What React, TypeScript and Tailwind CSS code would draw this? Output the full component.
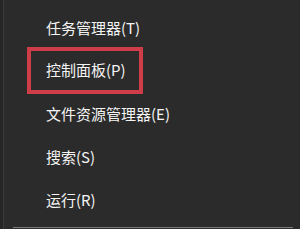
export default function App() {
  const items = ["任务管理器(T)", "控制面板(P)", "文件资源管理器(E)", "搜索(S)", "运行(R)"];

  return (
    <div
      className="w-[300px] h-[229px] bg-[#2b2b2b] flex overflow-hidden"
      style={{ fontFamily: '"Noto Sans CJK SC", "Noto Sans", sans-serif' }}
    >
      <div className="w-[4px] bg-[#262626] border-r border-[#3a3a3a]" />
      <div className="flex-1 flex flex-col">
        <div className="flex flex-col pt-[6px] pl-[27px]">
          {items.map((item, i) => (
            <div key={i} className="h-[43px] flex items-center">
              <div
                className={
                  i === 1
                    ? "h-[47px] w-[116px] -ml-[4px] border-[4px] border-[#cf3e48] flex items-center pl-[15px]"
                    : "pl-[15px]"
                }
              >
                <span className="text-[15px] text-[#f4f4f4]">{item}</span>
              </div>
            </div>
          ))}
        </div>
        <div className="mt-auto mb-[1px] ml-[9px] mr-[7px] h-[1px] bg-[#7a7a7a]" />
      </div>
    </div>
  );
}
